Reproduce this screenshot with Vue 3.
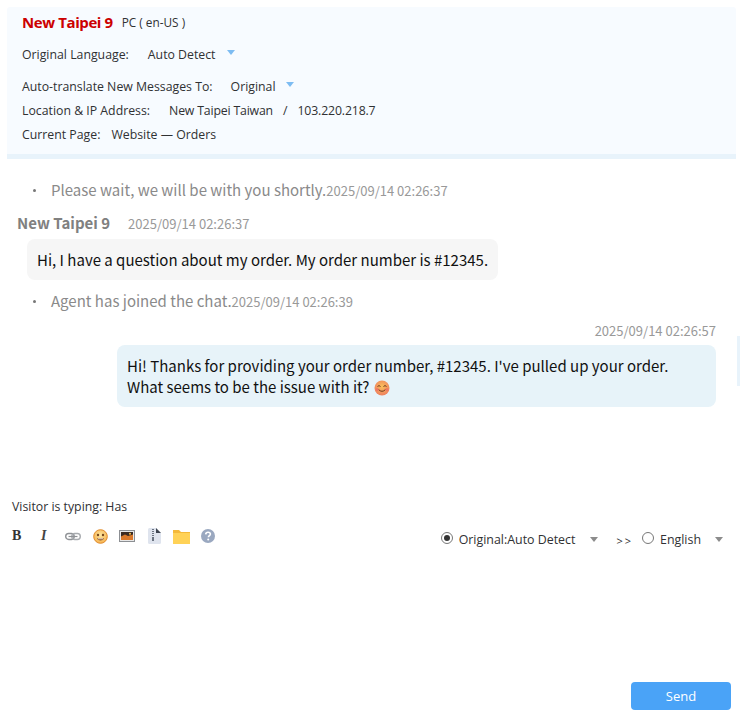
<script setup>
const info = [
  { label: 'Location & IP Address:', value: 'New Taipei Taiwan', extra: '103.220.218.7' },
  { label: 'Current Page:', value: 'Website — Orders' },
]
</script>

<template>
  <div class="page">
    <header class="head">
      <div class="title">
        <span class="name">New Taipei 9</span>
        <span class="device">PC ( en-US )</span>
      </div>
      <div class="row row-lang">
        <span>Original Language:</span>
        <span class="val">Auto Detect</span>
        <i class="caret blue"></i>
      </div>
      <div class="row row-auto">
        <span>Auto-translate New Messages To:</span>
        <span class="val">Original</span>
        <i class="caret blue"></i>
      </div>
      <div class="row row-loc">
        <span>{{ info[0].label }}</span>
        <span class="val-loc">{{ info[0].value }}</span>
        <span class="slash">/</span>
        <span class="ip">{{ info[0].extra }}</span>
      </div>
      <div class="row row-page">
        <span>{{ info[1].label }}</span>
        <span class="val-page">{{ info[1].value }}</span>
      </div>
    </header>

    <section class="chat">
      <div class="sys sys-1"><span class="dot"></span>Please wait, we will be with you shortly.<span class="time">2025/09/14 02:26:37</span></div>
      <div class="visitor-meta"><b>New Taipei 9</b><span class="time">2025/09/14 02:26:37</span></div>
      <div class="bubble in">Hi, I have a question about my order. My order number is #12345.</div>
      <div class="sys sys-2"><span class="dot"></span>Agent has joined the chat.<span class="time">2025/09/14 02:26:39</span></div>
      <div class="agent-meta"><span class="time">2025/09/14 02:26:57</span></div>
      <div class="bubble out">Hi! Thanks for providing your order number, #12345. I've pulled up your order. What seems to be the issue with it?
        <svg class="emoji" viewBox="0 0 16 16">
          <defs>
            <radialGradient id="face" cx="50%" cy="40%" r="60%">
              <stop offset="0" stop-color="#f9c05c" />
              <stop offset="1" stop-color="#ee7f5e" />
            </radialGradient>
          </defs>
          <circle cx="8" cy="8" r="7.5" fill="url(#face)" />
          <path d="M3.500 6.500q1.500-1.800 3 0M9.500 6.500q1.500-1.800 3 0" fill="none" stroke="#6b3a1e" stroke-width="1" />
          <path d="M4.500 9.500q3.500 3.600 7 0" fill="none" stroke="#6b3a1e" stroke-width="1" />
          <circle cx="3.200" cy="9.500" r="1.500" fill="#ec6a6a" opacity=".7" />
          <circle cx="12.800" cy="9.500" r="1.500" fill="#ec6a6a" opacity=".7" />
        </svg>
      </div>
      <i class="scroll-mark"></i>
    </section>

    <div class="typing">Visitor is typing: Has</div>

    <div class="toolbar">
      <div class="tools">
        <span class="tool-b">B</span>
        <span class="tool-i">I</span>
        <svg class="tool-link" viewBox="0 0 16 9">
          <rect x="0.7" y="1.500" width="8.500" height="6" rx="3" fill="none" stroke="#8f9296" stroke-width="1.400" />
          <rect x="6.800" y="1.500" width="8.500" height="6" rx="3" fill="none" stroke="#a9acb0" stroke-width="1.400" />
          <path d="M3.500 4.500h9" stroke="#8f9296" stroke-width="1.200" />
        </svg>
        <svg class="tool-smile" viewBox="0 0 15 15">
          <defs>
            <radialGradient id="smile" cx="50%" cy="40%" r="60%">
              <stop offset="0" stop-color="#fde6a0" />
              <stop offset="1" stop-color="#f6b24e" />
            </radialGradient>
          </defs>
          <circle cx="7.500" cy="7.500" r="6.800" fill="url(#smile)" stroke="#e08b2c" />
          <circle cx="5" cy="6" r="1.200" fill="#7a4a20" />
          <circle cx="10" cy="6" r="1.200" fill="#7a4a20" />
          <path d="M4 9.200h7q-.6 2.400-3.500 2.400t-3.500-2.400z" fill="#8a4f1f" />
          <path d="M5 9.800h5" stroke="#fff" stroke-width=".8" />
        </svg>
        <svg class="tool-img" viewBox="0 0 16 12">
          <rect x="0.500" y="0.500" width="15" height="11" fill="#e8e8e8" stroke="#8c8f93" />
          <rect x="2" y="2" width="12" height="8" fill="#3a2a22" />
          <path d="M2 6.500l4-2 3 1.500 5-1.500v5.500H2z" fill="#d9782a" />
          <circle cx="11" cy="3.800" r="1" fill="#f5c04a" />
        </svg>
        <svg class="tool-zip" viewBox="0 0 13 16">
          <path d="M1.500 0H8l5 5v9.500q0 1.500-1.500 1.500h-10Q0 16 0 14.500v-13Q0 0 1.500 0z" fill="#dfe4ee" />
          <path d="M8 0l5 5H8z" fill="#3d4450" />
          <path d="M5 1v9" stroke="#6c7482" stroke-width="2" stroke-dasharray="1 1" />
          <rect x="4" y="10" width="2" height="3" fill="#6c7482" />
        </svg>
        <svg class="tool-folder" viewBox="0 0 17 15">
          <path d="M0 1h6l2 2h9v12H0z" fill="#f4b93a" />
          <path d="M0 4h17v11H0z" fill="#ffd257" />
        </svg>
        <svg class="tool-help" viewBox="0 0 14 14">
          <circle cx="7" cy="7" r="7" fill="#9aa8c0" />
          <path d="M4.700 5.300q.2-2 2.400-2t2.300 1.800q0 1-1.100 1.700-.9.500-.9 1.400" fill="none" stroke="#fff" stroke-width="1.600" />
          <circle cx="7.200" cy="10.500" r="1" fill="#fff" />
        </svg>
      </div>
      <div class="lang-pick">
        <i class="radio on"></i><span class="opt-1">Original:Auto Detect</span><i class="caret grey c1"></i>
        <span class="arrows">&gt;&gt;</span>
        <i class="radio"></i><span class="opt-2">English</span><i class="caret grey c2"></i>
      </div>
    </div>

    <div class="editor"></div>

    <div class="foot"><button class="send">Send</button></div>
  </div>
</template>

<style>
html, body { margin: 0; background: #fff; overflow: hidden; }
</style>

<style scoped>
.page {
  width: 740px;
  height: 722px;
  position: relative;
  overflow: hidden;
  box-sizing: border-box;
  padding-top: 7px;
  font-family: "Open Sans", "Noto Sans", sans-serif;
  color: #303133;
  font-size: 12.3px;
}
.head {
  margin: 0 4px 0 7px;
  height: 152px;
  box-sizing: border-box;
  padding: 0 15px;
  background: #f7fbff;
  border-bottom: 5px solid #e8f3fb;
  border-radius: 3px 3px 0 0;
}
.title { height: 30px; display: flex; align-items: center; }
.name { font-size: 15px; font-weight: 700; color: #cc0000; letter-spacing: -0.4px; }
.device { margin-left: 9px; font-size: 11.8px; }
.row { display: flex; align-items: center; height: 24px; white-space: nowrap; }
.row-lang { margin-top: 5px; }
.row-auto { margin-top: 8px; }
.val { margin-left: 18px; }
.row-lang .val { margin-left: 19px; }
.row-lang .caret { margin-left: 11px; margin-top: -4px; }
.row-auto .caret { margin-left: 10px; margin-top: -4px; }
.val-loc { margin-left: 19px; letter-spacing: -0.18px; }
.slash { margin: 0 10px; }
.ip { letter-spacing: -0.15px; }
.val-page { margin-left: 11px; }
.caret {
  display: inline-block;
  width: 0;
  height: 0;
  border: 4px solid transparent;
  border-bottom-width: 0;
  border-top-width: 5px;
}
.caret.blue { border-top-color: #7dbcf2; }
.caret.grey { border-top-color: #8c8c8c; }

.chat {
  height: 331px;
  position: relative;
  font-family: "Noto Sans CJK SC", "Noto Sans", sans-serif;
  font-size: 15px;
}
.time { font-size: 13px; color: #999; }
.sys {
  position: relative;
  padding-left: 51px;
  color: #8a8a8a;
  line-height: 22px;
  white-space: nowrap;
}
.dot {
  position: absolute;
  left: 33px;
  top: 10px;
  width: 3px;
  height: 3px;
  border-radius: 50%;
  background: #777;
}
.sys-1 { padding-top: 20px; }
.sys-1 .dot { top: 30px; }
.visitor-meta {
  margin: 10px 0 0 17px;
  line-height: 22px;
  white-space: nowrap;
  color: #808080;
}
.visitor-meta b { font-weight: 700; margin-right: 18px; }
.bubble {
  box-sizing: border-box;
  border-radius: 8px;
  color: #111;
  padding: 10px;
  line-height: 21px;
}
.bubble.in {
  margin: 4px 0 0 27px;
  width: 471px;
  background: #f6f6f6;
  white-space: nowrap;
}
.sys-2 { margin-top: 10px; }
.agent-meta {
  text-align: right;
  padding-right: 24px;
  margin-top: 6px;
  line-height: 22px;
}
.bubble.out {
  margin: 3px 24px 0 auto;
  width: 599px;
  background: #e7f3f9;
  height: 62px;
}
.emoji { width: 16px; height: 16px; vertical-align: -3px; margin-left: 1px; }
.scroll-mark {
  position: absolute;
  right: 0;
  top: 177px;
  width: 3px;
  height: 50px;
  background: #e8f3fb;
}

.typing { margin-left: 12px; height: 20px; line-height: 20px; margin-top: 7px; }
.toolbar {
  display: flex;
  align-items: center;
  justify-content: space-between;
  height: 30px;
  margin-top: 7px;
  padding: 0 17px 0 12px;
}
.tools { display: flex; align-items: center; height: 20px; margin-top: -6px; }
.tool-b { font-family: "Liberation Serif", serif; font-weight: 700; font-size: 14px; width: 11px; color: #333; }
.tool-i { font-family: "Liberation Serif", serif; font-style: italic; font-weight: 700; font-size: 14px; margin-left: 18px; width: 6px; color: #444; }
.tool-link { width: 16px; height: 9px; margin-left: 18px; }
.tool-smile { width: 15px; height: 15px; margin-left: 12px; }
.tool-img { width: 16px; height: 12px; margin-left: 11px; }
.tool-zip { width: 13px; height: 16px; margin-left: 13px; }
.tool-folder { width: 17px; height: 15px; margin-left: 12px; }
.tool-help { width: 14px; height: 14px; margin-left: 11px; }
.lang-pick { display: flex; align-items: center; font-size: 12.4px; white-space: nowrap; }
.radio {
  width: 12px;
  height: 12px;
  box-sizing: border-box;
  border: 1px solid #777;
  border-radius: 50%;
  position: relative;
  margin-top: -2px;
}
.radio.on::after {
  content: "";
  position: absolute;
  left: 2px;
  top: 2px;
  width: 6px;
  height: 6px;
  border-radius: 50%;
  background: #333;
}
.opt-1 { margin-left: 6px; }
.c1 { margin-left: 15px; }
.arrows { margin: 2px 9px 0 18px; font-size: 11px; letter-spacing: 2px; }
.opt-2 { margin-left: 6px; }
.c2 { margin-left: 14px; }
.editor { height: 128px; }
.foot { display: flex; justify-content: flex-end; padding-right: 9px; }
.send {
  width: 100px;
  height: 28px;
  border: 0;
  border-radius: 4px;
  background: #4aa3f7;
  color: #fff;
  font-family: inherit;
  font-size: 13px;
  padding: 0;
}
</style>
